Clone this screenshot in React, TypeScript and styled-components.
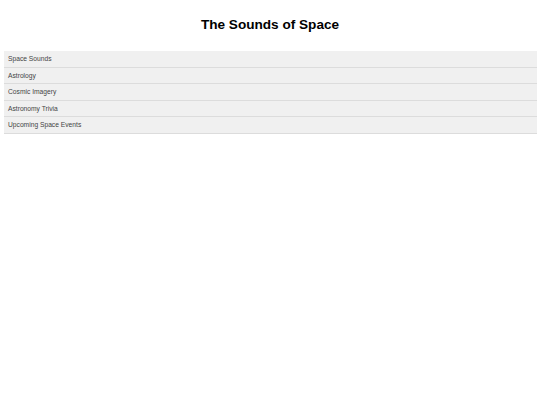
import React from 'react';
import styled, { createGlobalStyle } from 'styled-components';

const GlobalStyle = createGlobalStyle`
  html, body {
    margin: 0;
    padding: 0;
    background: #ffffff;
  }
  body {
    font-family: 'Liberation Sans', Arial, sans-serif;
    color: #222;
  }
`;

const Page = styled.div`
  padding: 0 3.5px;
`;

const Title = styled.h1`
  margin: 0;
  padding: 16px 0 17px;
  text-align: center;
  font-size: 13.6px;
  font-weight: bold;
  line-height: 18px;
  color: #000;
`;

const TopicList = styled.ul`
  list-style: none;
  margin: 0;
  padding: 0;
`;

const Topic = styled.li`
  background: #f0f0f0;
  border-bottom: 1px solid #dcdcdc;
  padding: 0 4.5px;
  height: 15.5px;
  display: flex;
  align-items: center;
  font-size: 6.7px;
  color: #444;
`;

const topics = ['Space Sounds', 'Astrology', 'Cosmic Imagery', 'Astronomy Trivia', 'Upcoming Space Events'];

export default function App() {
  return (
    <Page>
      <GlobalStyle />
      <Title>The Sounds of Space</Title>
      <TopicList>
        {topics.map((t) => (
          <Topic key={t}>{t}</Topic>
        ))}
      </TopicList>
    </Page>
  );
}
